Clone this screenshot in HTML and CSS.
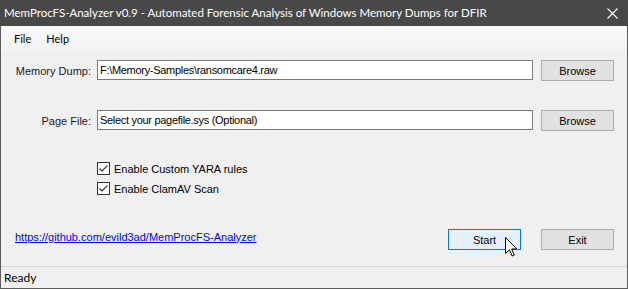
FILE: index.html
```html
<!DOCTYPE html>
<html lang="en">
<head>
    <meta charset="UTF-8">
    <title>MemProcFS-Analyzer v0.9</title>
    <link rel="stylesheet" href="styles.css">
</head>
<body>
    <div class="window">
        <div class="titlebar">
            <span class="title">MemProcFS-Analyzer v0.9 - Automated Forensic Analysis of Windows Memory Dumps for DFIR</span>
            <svg class="close" width="11" height="11" viewBox="0 0 11 11">
                <path d="M0.5 0.5 L10.5 10.5 M10.5 0.5 L0.5 10.5" stroke="#ffffff" stroke-width="1.1" fill="none"/>
            </svg>
        </div>

        <div class="menubar">
            <span class="menu-item">File</span>
            <span class="menu-item">Help</span>
        </div>

        <div class="form">
            <div class="row">
                <label for="dump">Memory Dump:</label>
                <input type="text" id="dump" value="F:\Memory-Samples\ransomcare4.raw">
                <button class="btn">Browse</button>
            </div>

            <div class="row row-page">
                <label for="pagefile">Page File:</label>
                <input type="text" id="pagefile" value="Select your pagefile.sys (Optional)">
                <button class="btn">Browse</button>
            </div>

            <div class="checks">
                <div class="check">
                    <span class="box">
                        <svg width="11" height="11" viewBox="0 0 11 11"><path d="M1.5 5.5 L4 8 L9.5 2.5" stroke="#333" stroke-width="1.2" fill="none"/></svg>
                    </span>
                    <span>Enable Custom YARA rules</span>
                </div>
                <div class="check">
                    <span class="box">
                        <svg width="11" height="11" viewBox="0 0 11 11"><path d="M1.5 5.5 L4 8 L9.5 2.5" stroke="#333" stroke-width="1.2" fill="none"/></svg>
                    </span>
                    <span>Enable ClamAV Scan</span>
                </div>
            </div>

            <div class="bottom">
                <a class="link" href="#">https://github.com/evild3ad/MemProcFS-Analyzer</a>
                <button class="btn btn-start">Start</button>
                <button class="btn btn-exit">Exit</button>
                <svg class="cursor" width="13" height="20" viewBox="0 0 13 20">
                    <path d="M0.5 0.5 L0.5 16.5 L4.5 12.8 L7.2 19 L9.3 18 L6.7 12 L11.8 12 Z" fill="#ffffff" stroke="#000000" stroke-width="1" stroke-linejoin="miter"/>
                </svg>
            </div>
        </div>

        <div class="statusbar">Ready</div>
    </div>
</body>
</html>
```

FILE: styles.css
```css
* {
    margin: 0;
    padding: 0;
    box-sizing: border-box;
}

body {
    width: 628px;
    height: 289px;
    font-family: 'Liberation Sans', Arial, sans-serif;
    font-size: 11px;
    color: #000;
    background: #f0f0f0;
    overflow: hidden;
}

.window {
    width: 628px;
    height: 289px;
    display: flex;
    flex-direction: column;
    border: 1px solid #5c5c5c;
    border-top: none;
    background: #f0f0f0;
}

/* title bar */
.titlebar {
    height: 26px;
    margin: 0 -1px;
    background: #484848;
    display: flex;
    align-items: center;
    justify-content: space-between;
    padding: 0 10px 1px 4px;
}

.title {
    font-family: 'Lato', 'Noto Sans', sans-serif;
    font-size: 11.5px;
    color: #ffffff;
}

.close {
    margin-top: 1px;
}

/* menu */
.menu-item {
    padding: 0 7px;
    margin-right: 1px;
}

.menubar {
    height: 24px;
    background: linear-gradient(#f9f9f9, #f3f3f3);
    display: flex;
    align-items: center;
    padding-left: 6px;
    padding-top: 1px;
    font-family: 'Lato', 'Noto Sans', sans-serif;
    font-size: 11px;
}

/* form */
.form {
    flex: 1;
    position: relative;
    padding-top: 10px;
}

.row {
    display: flex;
    align-items: center;
    height: 21px;
}

.row-page {
    margin-top: 29px;
}

.row label {
    width: 90px;
    text-align: right;
    margin-right: 6px;
    color: #1a1a1a;
}

.row input {
    width: 436px;
    height: 20px;
    border: 1px solid #7a7a7a;
    background: #fff;
    font-family: inherit;
    font-size: 11px;
    letter-spacing: -0.3px;
    padding: 0 2px;
    outline: none;
    align-self: flex-start;
}

.btn {
    width: 73px;
    height: 21px;
    background: #e1e1e1;
    border: 1px solid #adadad;
    font-family: inherit;
    font-size: 11px;
    color: #000;
}

.row .btn {
    margin-left: 8px;
}

.checks {
    margin-top: 31px;
    padding-left: 96px;
    display: flex;
    flex-direction: column;
    gap: 7px;
}

.check {
    display: flex;
    align-items: center;
    gap: 4px;
    height: 13px;
    font-size: 11px;
}

.box {
    width: 13px;
    height: 13px;
    border: 1px solid #333;
    background: #fff;
    display: flex;
    align-items: center;
    justify-content: center;
}

.bottom {
    margin-top: 34px;
    display: flex;
    align-items: center;
    height: 21px;
    position: relative;
}

.link {
    color: #0000ff;
    margin-left: 14px;
    margin-bottom: 6px;
    width: 433px;
}

.btn-start {
    background: #e5f1fb;
    border-color: #0078d7;
}

.btn-exit {
    margin-left: 20px;
}

.cursor {
    position: absolute;
    left: 504px;
    top: 8px;
}

/* status bar */
.statusbar {
    height: 22px;
    border-top: 1px solid #d7d7d7;
    padding: 3px 0 0 3px;
    font-family: 'Lato', 'Noto Sans', sans-serif;
    font-size: 12px;
}
```
